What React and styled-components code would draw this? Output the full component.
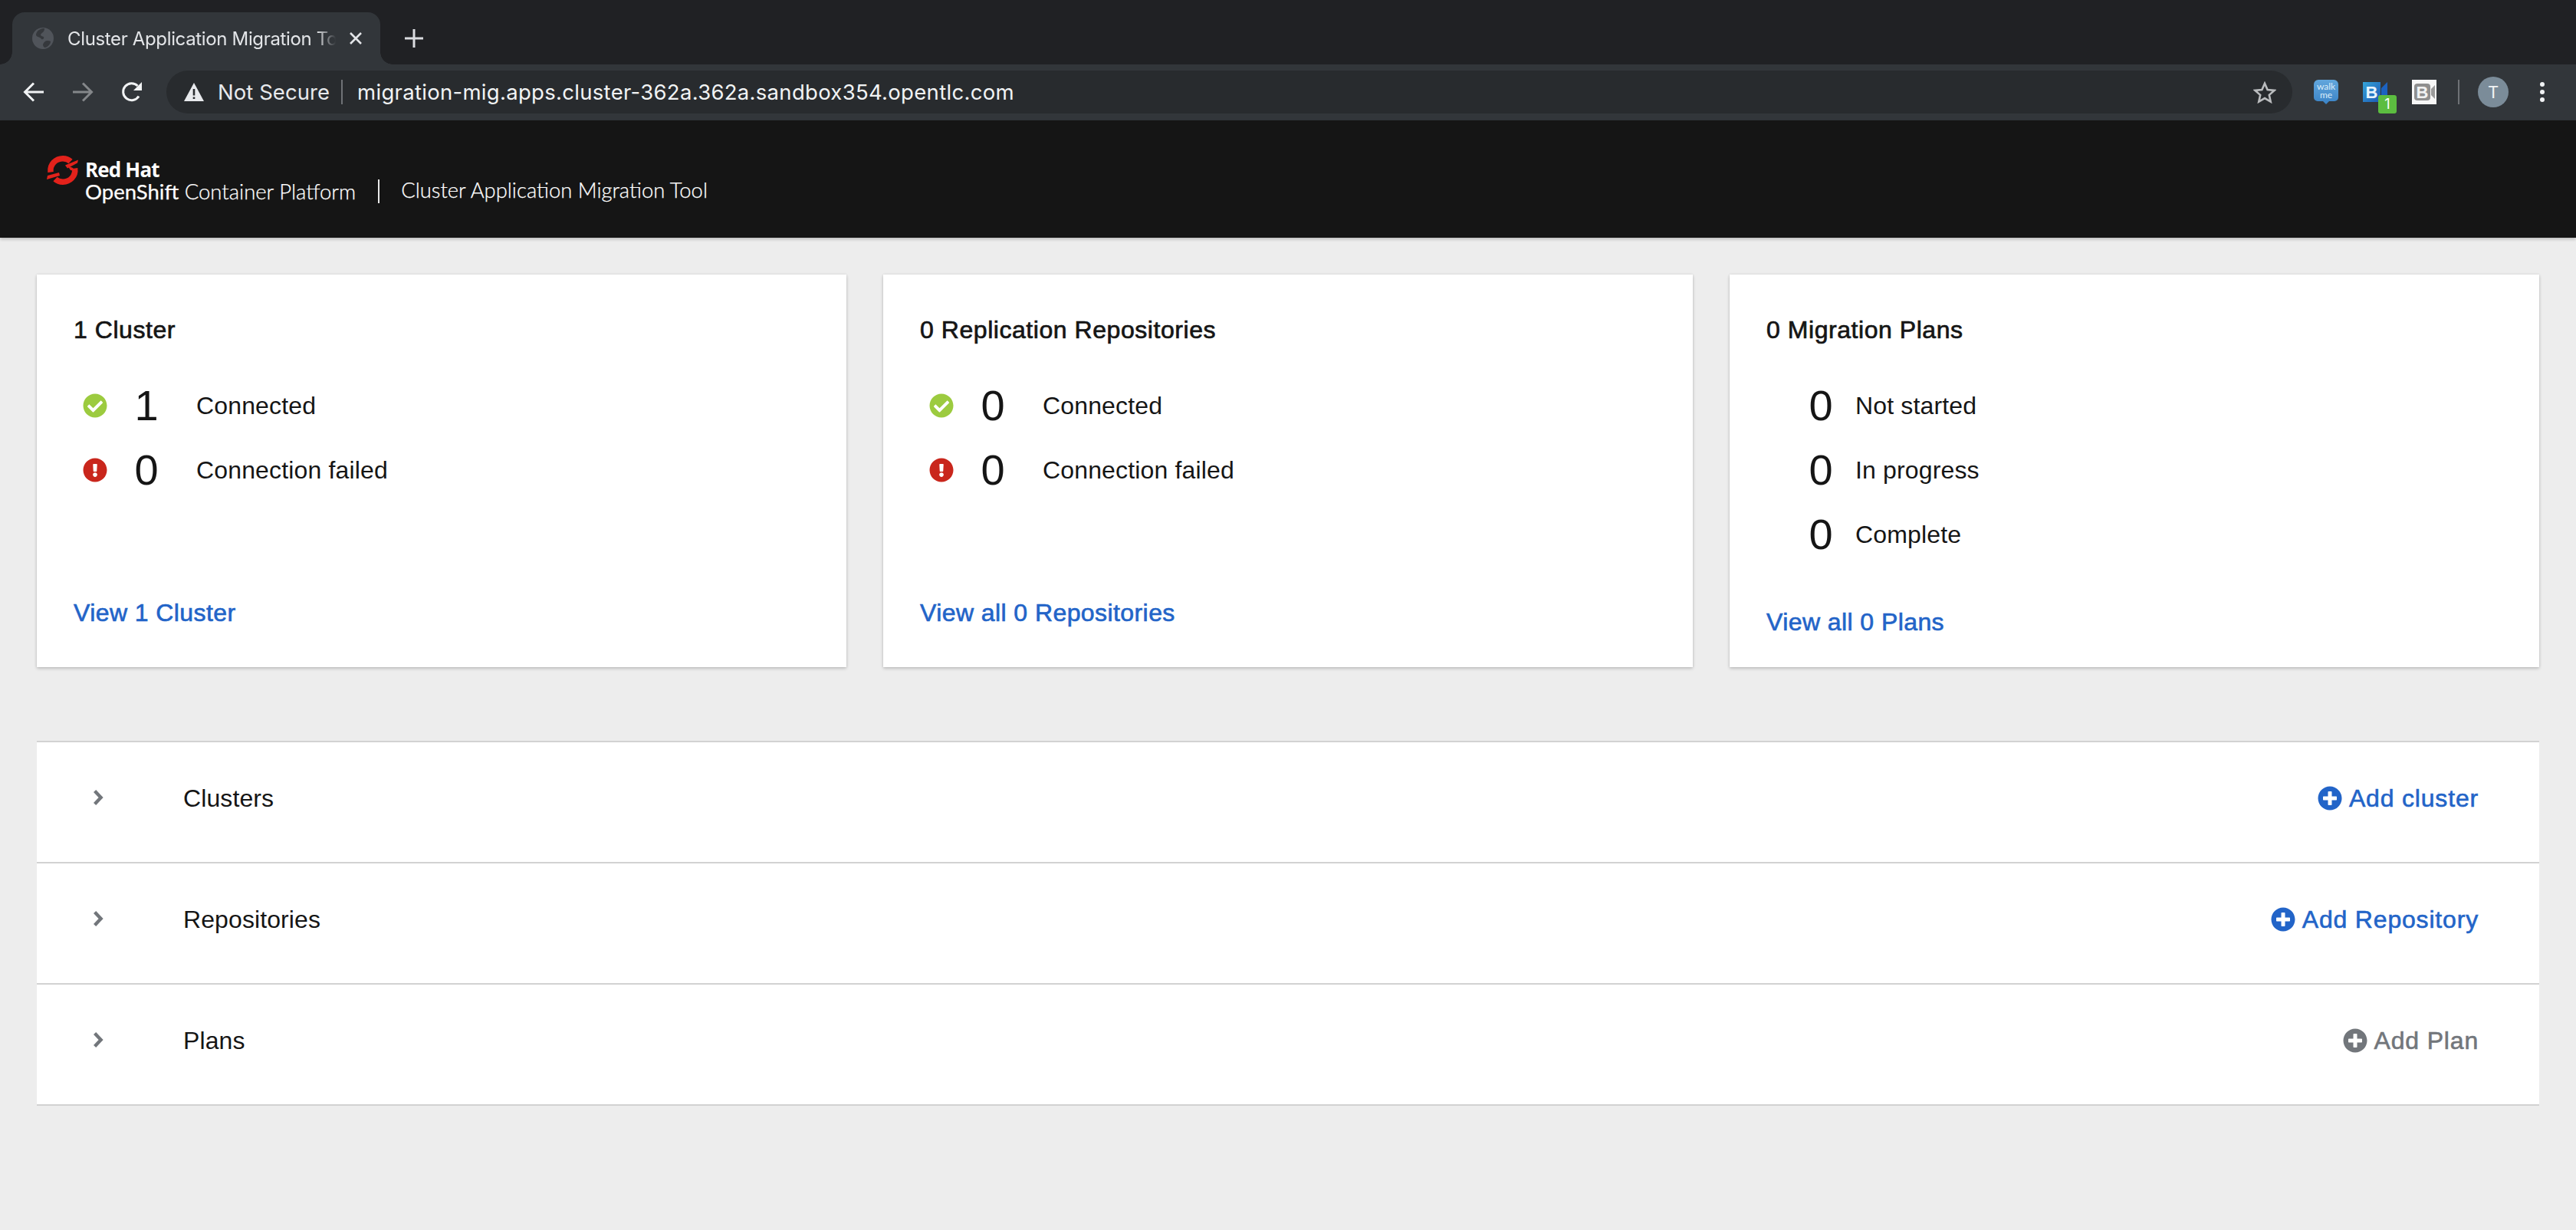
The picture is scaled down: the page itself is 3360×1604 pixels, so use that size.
import React from 'react';
import styled, { createGlobalStyle } from 'styled-components';
import { FaCheckCircle, FaExclamationCircle, FaPlusCircle } from 'react-icons/fa';

const GlobalStyle = createGlobalStyle`
  html, body { margin: 0; padding: 0; background: #ededed; }
  * { box-sizing: border-box; }
  body { font-family: "Liberation Sans", Arial, sans-serif; color: #151515; }
`;

const Page = styled.div`
  width: 3360px;
  min-height: 1604px;
  background: #ededed;
  display: flex;
  flex-direction: column;
`;

/* browser chrome */
const TabStrip = styled.div`
  height: 84px;
  background: #202124;
  padding: 16px 0 0 16px;
  display: flex;
  align-items: flex-start;
`;
const Tab = styled.div`
  position: relative;
  width: 480px;
  height: 68px;
  background: #32363a;
  border-radius: 16px 16px 0 0;
  display: flex;
  align-items: center;
  padding: 0 23px 0 26px;
  &::before, &::after {
    content: '';
    position: absolute;
    bottom: 0;
    width: 16px;
    height: 16px;
  }
  &::before { left: -16px; background: radial-gradient(circle at 0 0, transparent 15.5px, #32363a 16px); }
  &::after { right: -16px; background: radial-gradient(circle at 100% 0, transparent 15.5px, #32363a 16px); }
`;
const TabTitle = styled.div`
  flex: 1;
  margin: 0 6px 0 18px;
  overflow: hidden;
  white-space: nowrap;
  font-family: Inter, "Liberation Sans", sans-serif;
  font-size: 24px;
  letter-spacing: -0.35px;
  color: #e3e5e8;
  -webkit-mask-image: linear-gradient(90deg, #000 90%, transparent 97%);
  mask-image: linear-gradient(90deg, #000 90%, transparent 97%);
`;
const NewTab = styled.div`
  width: 24px;
  height: 24px;
  margin: 22px 0 0 32px;
  display: flex;
`;
const Toolbar = styled.div`
  height: 73px;
  background: #32363a;
  padding: 8px 12px 0 12px;
  display: flex;
  align-items: flex-start;
`;
const NavButton = styled.div`
  width: 64px;
  height: 56px;
  display: flex;
  align-items: center;
  justify-content: center;
`;
const Omnibox = styled.div`
  flex: 1;
  height: 56px;
  margin: 0 12px 0 13px;
  background: #282b2e;
  border-radius: 28px;
  display: flex;
  align-items: center;
  padding: 0 21px 0 23px;
  font-family: Inter, "Liberation Sans", sans-serif;
  font-size: 27.5px;
`;
const SecurityText = styled.span`
  color: #e8eaed;
  margin-left: 18px;
  letter-spacing: 0.05px;
`;
const OmniDivider = styled.span`
  width: 2px;
  height: 32px;
  margin: 0 19px 0 15px;
  background: #6f7276;
`;
const Url = styled.span`
  flex: 1;
  color: #f1f3f4;
  letter-spacing: 0.3px;
`;
const ExtSlot = styled.div`
  position: relative;
  width: 64px;
  height: 56px;
  display: flex;
  align-items: center;
  justify-content: center;
`;
const Badge = styled.span`
  position: absolute;
  left: 36px;
  top: 32px;
  width: 24px;
  height: 24px;
  border-radius: 3px;
  background: #5cbd40;
  color: #fff;
  font-family: Inter, "Liberation Sans", sans-serif;
  font-size: 18px;
  line-height: 24px;
  text-align: center;
`;
const ToolbarDivider = styled.span`
  width: 2px;
  height: 32px;
  margin: 12px 0 0 12px;
  background: #6f7276;
`;
const Avatar = styled.div`
  width: 40px;
  height: 40px;
  margin: 8px 12px 0 24px;
  border-radius: 50%;
  background: #7b8c99;
  color: #f1f3f4;
  font-family: Inter, "Liberation Sans", sans-serif;
  font-size: 22px;
  line-height: 40px;
  text-align: center;
`;

/* application header */
const Header = styled.header`
  height: 153px;
  background: #151515;
  box-shadow: 0 2px 4px rgba(3, 3, 3, 0.22);
  display: flex;
  align-items: flex-start;
  padding: 46px 0 0 61px;
  color: #fff;
  font-family: Lato, "Liberation Sans", sans-serif;
  position: relative;
`;
const Brand = styled.div`
  display: flex;
  gap: 8px;
  align-items: flex-start;
`;
const BrandText = styled.div`
  padding-top: 6px;
  display: flex;
  flex-direction: column;
`;
const RedHatName = styled.span`
  font-family: "Open Sans", "Liberation Sans", sans-serif;
  font-size: 26px;
  line-height: 25px;
  font-weight: 700;
  letter-spacing: -0.85px;
`;
const ProductName = styled.span`
  font-size: 27.5px;
  line-height: 32px;
  font-weight: 300;
  white-space: nowrap;
  -webkit-text-stroke: 0.25px #fff;
  & b { font-weight: 400; }
`;
const HeaderDivider = styled.span`
  width: 2px;
  height: 31px;
  margin: 31px 28px 0 29px;
  background: #e8e8e8;
`;
const HeaderTitle = styled.span`
  margin-top: 29px;
  font-size: 27.4px;
  line-height: 32px;
  font-weight: 300;
  white-space: nowrap;
  -webkit-text-stroke: 0.25px #fff;
`;

/* dashboard */
const Main = styled.main`
  padding: 48px 48px 0;
  display: flex;
  flex-direction: column;
  gap: 96px;
`;
const CardGrid = styled.div`
  display: grid;
  grid-template-columns: repeat(3, 1056px);
  gap: 48px;
`;
const Card = styled.section`
  height: 512px;
  background: #fff;
  box-shadow: 0 2px 4px rgba(3, 3, 3, 0.18), 0 0 3px rgba(3, 3, 3, 0.1);
  padding: 48px 48px ${(p) => (p.$tight ? '35px' : '47px')};
  display: flex;
  flex-direction: column;
`;
const CardTitle = styled.h2`
  margin: 0 0 32px;
  font-size: 32px;
  line-height: 49px;
  font-weight: 400;
  letter-spacing: 0.55px;
  -webkit-text-stroke: 0.7px #151515;
`;
const StatRow = styled.div`
  height: 84px;
  display: flex;
  align-items: center;
  padding-left: ${(p) => (p.$plain ? '39px' : '12px')};
`;
const StatusIcon = styled.span`
  width: 32px;
  height: 32px;
  margin-right: 19px;
  display: flex;
  color: ${(p) => p.$color};
`;
const Count = styled.span`
  width: 64px;
  font-size: 56px;
  line-height: 64px;
  text-align: center;
  margin-right: ${(p) => (p.$plain ? '13px' : '33px')};
`;
const StatLabel = styled.span`
  font-size: 32px;
  line-height: 48px;
  letter-spacing: 0.15px;
`;
const CardLink = styled.a`
  margin-top: auto;
  font-size: 32px;
  line-height: 48px;
  color: #2264c8;
  letter-spacing: 0.42px;
  -webkit-text-stroke: 0.65px #2264c8;
`;
const Accordion = styled.div`
  display: flex;
  flex-direction: column;
  background: #fff;
  border-bottom: 2px solid #d2d2d2;
`;
const AccordionRow = styled.div`
  height: 158px;
  border-top: 2px solid #d2d2d2;
  padding: 48px 79px 0 73px;
  display: flex;
  align-items: flex-start;
`;
const Chevron = styled.span`
  width: 14px;
  height: 48px;
  display: flex;
  align-items: center;
  color: #72767b;
`;
const RowLabel = styled.span`
  flex: 1;
  margin-left: 104px;
  font-size: 32px;
  line-height: 50px;
  letter-spacing: 0.1px;
`;
const AddAction = styled.span`
  height: 48px;
  padding-top: 2px;
  display: flex;
  align-items: center;
  gap: 9px;
  font-size: 32px;
  letter-spacing: 0.82px;
  color: ${(p) => (p.$disabled ? '#72767b' : '#2264c8')};
  -webkit-text-stroke: 0.6px ${(p) => (p.$disabled ? '#72767b' : '#2264c8')};
`;

/* drawings */
const Favicon = () => (
  <svg width="28" height="28" viewBox="0 0 28 28">
    <circle cx="14" cy="14" r="14" fill="#50545a" />
    <path d="M14 1c-5 1-9 4-9 9 2 3 6 2 7 5 2 1 4-1 3-3-2-1-4-1-4-3 2-3 5-3 5-8zM20 17c-3 0-5 2-6 5 0 2 1 4 3 4 4-1 7-5 7-8-1-1-3-1-4-1z" fill="#35383c" />
  </svg>
);
const CloseTab = () => (
  <svg width="18" height="18" viewBox="0 0 18 18"><path d="M2 2l14 14M16 2L2 16" stroke="#e3e5e8" strokeWidth="2.6" /></svg>
);
const PlusMark = () => (
  <svg width="24" height="24" viewBox="0 0 24 24"><path d="M12 0v24M0 12h24" stroke="#dadce0" strokeWidth="3" /></svg>
);
const Arrow = ({ color, flip }) => (
  <svg width="28" height="26" viewBox="0 0 28 26" style={flip ? { transform: 'scaleX(-1)' } : undefined}>
    <path d="M27 13H3M14 1.5L2.5 13 14 24.5" fill="none" stroke={color} strokeWidth="3" />
  </svg>
);
const Reload = () => (
  <svg width="28" height="28" viewBox="0 0 28 28">
    <path d="M23 19.5A11 11 0 1 1 21.5 6" fill="none" stroke="#f1f3f4" strokeWidth="3" />
    <path d="M27 1v11H16z" fill="#f1f3f4" />
  </svg>
);
const Warning = () => (
  <svg width="26" height="24" viewBox="0 0 26 24">
    <path d="M13 0l13 24H0z" fill="#e8eaed" />
    <path d="M11.7 8h2.6v8.5h-2.6zM11.7 18.5h2.6V21h-2.6z" fill="#282b2e" />
  </svg>
);
const Star = () => (
  <svg width="30" height="29" viewBox="0 0 30 29">
    <path d="M15 2.8l3.6 8.2 8.9.9-6.7 6 1.9 8.7L15 22.1l-7.7 4.5 1.9-8.7-6.7-6 8.9-.9z" fill="none" stroke="#babcbe" strokeWidth="2.6" />
  </svg>
);
const WalkMe = () => (
  <svg width="32" height="32" viewBox="0 0 32 32">
    <defs><linearGradient id="wm" x1="0" y1="0" x2="0" y2="1"><stop offset="0" stopColor="#62a6dc" /><stop offset="1" stopColor="#3a83c6" /></linearGradient></defs>
    <path d="M6 0h20a6 6 0 0 1 6 6v17a5 5 0 0 1-5 5h-7l-4 4-4-4H5a5 5 0 0 1-5-5V6a6 6 0 0 1 6-6z" fill="url(#wm)" />
    <text x="16" y="13" fontFamily="Lato, sans-serif" fontSize="12" textAnchor="middle" fill="#dcecf8">walk</text>
    <text x="16" y="24" fontFamily="Lato, sans-serif" fontSize="12" textAnchor="middle" fill="#dcecf8">me</text>
  </svg>
);
const BlueB = () => (
  <svg width="32" height="26" viewBox="0 0 32 26">
    <defs><linearGradient id="bb" x1="0" y1="0" x2="1" y2="1"><stop offset="0" stopColor="#35a4d8" /><stop offset="1" stopColor="#1c58b4" /></linearGradient></defs>
    <rect width="23" height="26" fill="url(#bb)" />
    <path d="M24 8l8-8v26h-8z" fill="#1c62c0" />
    <text x="11.5" y="21" fontFamily="Liberation Sans, sans-serif" fontWeight="700" fontSize="22" textAnchor="middle" fill="#e8f4fc">B</text>
  </svg>
);
const GrayB = () => (
  <svg width="32" height="32" viewBox="0 0 32 32">
    <rect width="32" height="32" fill="#f7f7f7" />
    <rect x="3" y="5" width="21" height="22" rx="4" fill="#8f8f8f" />
    <path d="M25 12l5-5v18l-5-5z" fill="#9a9a9a" />
    <text x="13.5" y="23.5" fontFamily="Liberation Sans, sans-serif" fontWeight="700" fontSize="22" textAnchor="middle" fill="#f2f2f2">B</text>
  </svg>
);
const Dots = () => (
  <svg width="6" height="26" viewBox="0 0 6 26">
    <circle cx="3" cy="3" r="3" fill="#f1f3f4" /><circle cx="3" cy="13" r="3" fill="#f1f3f4" /><circle cx="3" cy="23" r="3" fill="#f1f3f4" />
  </svg>
);
const RedHatMark = () => (
  <svg width="42" height="38" viewBox="0 0 42 38">
    <g fill="none" stroke="#e3221b" strokeWidth="7.5">
      <path d="M5 21.5C3.8 11 12 3.8 21 3.8c4 0 7.5 1.3 10 3.7" />
      <path d="M36.6 16.5C38 27 30 34.2 21 34.2c-4 0-7.5-1.3-10-3.7" />
    </g>
    <g fill="#e3221b">
      <path d="M24 12.5L41 5.5l-1 4-13 7z" />
      <path d="M1 26l15-4 1 4L0 31z" />
      <path d="M27 13l7 3 3 4-6-1z" />
    </g>
  </svg>
);
const ChevronRight = () => (
  <svg width="14" height="20" viewBox="0 0 14 20"><path d="M2.6 1.6L10.6 10l-8 8.4" fill="none" stroke="currentColor" strokeWidth="4.4" /></svg>
);

const GREEN = '#9ccb3f';
const RED = '#c9261c';

const cards = [
  {
    title: '1 Cluster',
    link: 'View 1 Cluster',
    rows: [
      { icon: 'ok', n: 1, label: 'Connected' },
      { icon: 'bad', n: 0, label: 'Connection failed' },
    ],
  },
  {
    title: '0 Replication Repositories',
    link: 'View all 0 Repositories',
    rows: [
      { icon: 'ok', n: 0, label: 'Connected' },
      { icon: 'bad', n: 0, label: 'Connection failed' },
    ],
  },
  {
    title: '0 Migration Plans',
    link: 'View all 0 Plans',
    tight: true,
    rows: [
      { n: 0, label: 'Not started' },
      { n: 0, label: 'In progress' },
      { n: 0, label: 'Complete' },
    ],
  },
];

const sections = [
  { label: 'Clusters', action: 'Add cluster' },
  { label: 'Repositories', action: 'Add Repository' },
  { label: 'Plans', action: 'Add Plan', disabled: true },
];

export default function App() {
  return (
    <Page>
      <GlobalStyle />
      <TabStrip>
        <Tab>
          <Favicon />
          <TabTitle>Cluster Application Migration Tool</TabTitle>
          <CloseTab />
        </Tab>
        <NewTab><PlusMark /></NewTab>
      </TabStrip>
      <Toolbar>
        <NavButton><Arrow color="#f1f3f4" /></NavButton>
        <NavButton><Arrow color="#84878a" flip /></NavButton>
        <NavButton><Reload /></NavButton>
        <Omnibox>
          <Warning />
          <SecurityText>Not Secure</SecurityText>
          <OmniDivider />
          <Url>migration-mig.apps.cluster-362a.362a.sandbox354.opentlc.com</Url>
          <Star />
        </Omnibox>
        <ExtSlot><WalkMe /></ExtSlot>
        <ExtSlot>
          <BlueB />
          <Badge>1</Badge>
        </ExtSlot>
        <ExtSlot><GrayB /></ExtSlot>
        <ToolbarDivider />
        <Avatar>T</Avatar>
        <NavButton><Dots /></NavButton>
      </Toolbar>
      <Header>
        <Brand>
          <RedHatMark />
          <BrandText>
            <RedHatName>Red Hat</RedHatName>
            <ProductName><b>OpenShift</b> Container Platform</ProductName>
          </BrandText>
        </Brand>
        <HeaderDivider />
        <HeaderTitle>Cluster Application Migration Tool</HeaderTitle>
      </Header>
      <Main>
        <CardGrid>
          {cards.map((card) => (
            <Card key={card.title} $tight={card.tight}>
              <CardTitle>{card.title}</CardTitle>
              {card.rows.map((row) => (
                <StatRow key={row.label} $plain={!row.icon}>
                  {row.icon && (
                    <StatusIcon $color={row.icon === 'ok' ? GREEN : RED}>
                      {row.icon === 'ok' ? <FaCheckCircle size={32} /> : <FaExclamationCircle size={32} />}
                    </StatusIcon>
                  )}
                  <Count $plain={!row.icon}>{row.n}</Count>
                  <StatLabel>{row.label}</StatLabel>
                </StatRow>
              ))}
              <CardLink>{card.link}</CardLink>
            </Card>
          ))}
        </CardGrid>
        <Accordion>
          {sections.map((s) => (
            <AccordionRow key={s.label}>
              <Chevron><ChevronRight /></Chevron>
              <RowLabel>{s.label}</RowLabel>
              <AddAction $disabled={s.disabled}>
                <FaPlusCircle size={32} />
                {s.action}
              </AddAction>
            </AccordionRow>
          ))}
        </Accordion>
      </Main>
    </Page>
  );
}
